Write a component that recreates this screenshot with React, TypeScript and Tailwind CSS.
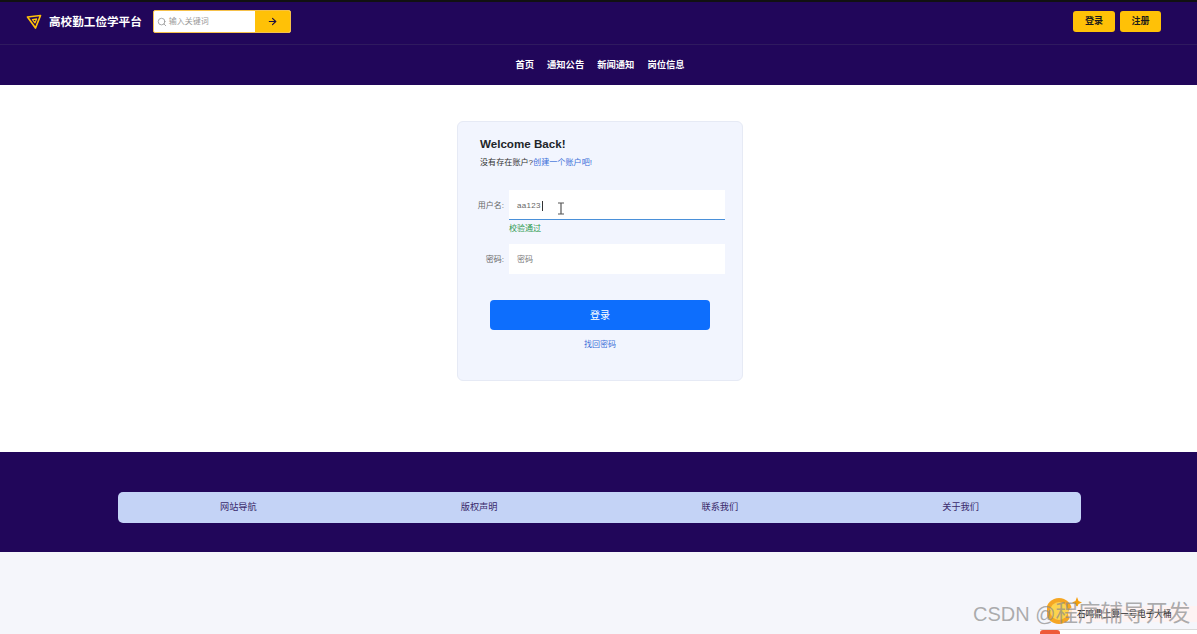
import { ArrowRight, Search } from "lucide-react";

const navItems = ["首页", "通知公告", "新闻通知", "岗位信息"];
const footerLinks = ["网站导航", "版权声明", "联系我们", "关于我们"];

function Logo() {
  return (
    <svg width="16" height="16" viewBox="0 0 16 16" fill="none" className="text-[#ffc107]">
      <path d="M1.5 3 L14.5 1.5 L9.5 14 Z" stroke="currentColor" strokeWidth="1.7" strokeLinejoin="round" />
      <path d="M6.5 5.6 L10.6 5 L9 8.8 Z" stroke="currentColor" strokeWidth="1.3" strokeLinejoin="round" />
    </svg>
  );
}

function Sun() {
  return (
    <svg width="38" height="28" viewBox="0 0 38 28">
      <circle cx="12" cy="14" r="13" fill="#f5a623" />
      <circle cx="12" cy="14" r="9" fill="#fcd34d" />
      <path d="M30 0 L31.5 4 L35 5.5 L31.5 7 L30 11 L28.5 7 L25 5.5 L28.5 4 Z" fill="#f59e0b" />
    </svg>
  );
}

export default function App() {
  return (
    <div className="relative h-[634px] overflow-hidden bg-[#f5f6fb] font-['Liberation_Sans','Noto_Sans_CJK_SC',sans-serif]">
      <header className="border-t-2 border-[#111111] bg-[#21065a]">
        {/* Top bar */}
        <div className="flex h-[43px] items-center justify-between border-b border-[#2f1a5f] pb-[3px] pl-[26px] pr-[36px]">
          <div className="flex items-center">
            <Logo />
            <span className="ml-[7px] text-[11.6px] font-bold text-white">高校勤工俭学平台</span>
            <div className="ml-[11px] flex h-[23px] w-[138px] overflow-hidden rounded-[2px] border border-[#f5c04a] bg-white">
              <div className="flex flex-1 items-center pl-[3px] text-[#999999]">
                <Search size={10} />
                <span className="ml-[2px] text-[8px]">输入关键词</span>
              </div>
              <div className="flex w-[35px] items-center justify-center bg-[#ffc107] text-[#21103f]">
                <ArrowRight size={11} strokeWidth={2.5} />
              </div>
            </div>
          </div>
          <div className="flex gap-[5px]">
            <button className="h-[21px] w-[42px] rounded-[3px] bg-[#ffc107] text-[9px] font-bold text-[#1a1a1a]">登录</button>
            <button className="h-[21px] w-[41px] rounded-[3px] bg-[#ffc107] text-[9px] font-bold text-[#1a1a1a]">注册</button>
          </div>
        </div>
        {/* Nav */}
        <nav className="flex h-[40px] items-center justify-center gap-[13px] pl-[3px] pt-[1px]">
          {navItems.map((item) => (
            <span key={item} className="text-[9.3px] font-bold text-white">
              {item}
            </span>
          ))}
        </nav>
      </header>

      <main className="flex h-[367px] justify-center bg-white pl-[3px] pt-[36px]">
        <div className="h-[260px] w-[286px] rounded-[6px] border border-[#e6eaf5] bg-[#f2f5fe] pt-[15px]">
          <div className="pl-[22px]">
            <h2 className="text-[11.6px] font-bold leading-[14px] text-[#212529]">Welcome Back!</h2>
            <p className="mt-[6px] text-[8.1px] leading-[12px] text-[#333333]">
              没有存在账户?<span className="text-[#3b6fd8]">创建一个账户吧!</span>
            </p>
          </div>

          {/* Form */}
          <div className="mt-[21px] flex items-center">
            <label className="w-[51px] pr-[5px] pt-[1px] text-right text-[8px] text-[#666666]">用户名:</label>
            <div className="flex h-[30px] w-[216px] items-center bg-white pl-[8px] pt-[1px] text-[8px] tracking-[0.3px] text-[#666666] shadow-[inset_0_-1px_0_#4a90d9]">
              aa123<span className="ml-px h-[10px] w-px bg-[#333333]" />
            </div>
          </div>
          <p className="mt-[2px] pl-[51px] text-[8px] leading-[14px] text-[#2e9a4f]">校验通过</p>
          <div className="mt-[8px] flex items-center">
            <label className="w-[51px] pr-[5px] pt-[1px] text-right text-[8px] text-[#666666]">密码:</label>
            <div className="flex h-[30px] w-[216px] items-center bg-white pl-[8px] pt-[1px] text-[8px] text-[#777777]">密码</div>
          </div>

          <button className="ml-[32px] mt-[26px] block h-[30px] w-[220px] rounded-[4px] bg-[#0d6efd] text-[10px] text-white">登录</button>
          <p className="mt-[9px] text-center text-[8px] leading-[12px] text-[#3b6fd8]">找回密码</p>
        </div>
      </main>

      <footer className="flex h-[100px] items-center justify-center bg-[#21065a] pl-[2px] pt-[11px]">
        <div className="grid h-[31px] w-[963px] grid-cols-4 items-center rounded-[5px] bg-[#c4d3f6]">
          {footerLinks.map((link) => (
            <span key={link} className="text-center text-[9.2px] text-[#3a2a6b]">
              {link}
            </span>
          ))}
        </div>
      </footer>

      {/* CSDN watermark */}
      <div className="absolute left-[1047px] top-[597px]">
        <Sun />
      </div>
      <div className="absolute left-[1068px] top-[606px] w-[129px] rounded-l-[10px] bg-[#fff3f1]/80 py-[1px] pl-[9px] text-[8.6px] leading-[14px] text-[#222222]">
        石鸣鼎上算一号电子大桶
      </div>
      <span className="absolute left-[973px] top-[601px] whitespace-nowrap text-[20px] leading-[26px] text-[#8a8a8a]/70">
        CSDN @<span className="text-[22.5px]">程序辅导开发</span>
      </span>
      <div className="absolute left-[1040px] top-[629px] h-[5px] w-[157px] border-t border-[#d9d9d9] bg-white">
        <div className="h-[5px] w-[20px] rounded-t-[3px] bg-[#ee5a3a]" />
      </div>

      {/* I-beam cursor */}
      <svg className="absolute left-[557px] top-[202px]" width="8" height="13" viewBox="0 0 8 13" fill="none">
        <path d="M1 1 H7 M4 1 V12 M1 12 H7" stroke="#555555" strokeWidth="1.2" />
      </svg>
    </div>
  );
}
